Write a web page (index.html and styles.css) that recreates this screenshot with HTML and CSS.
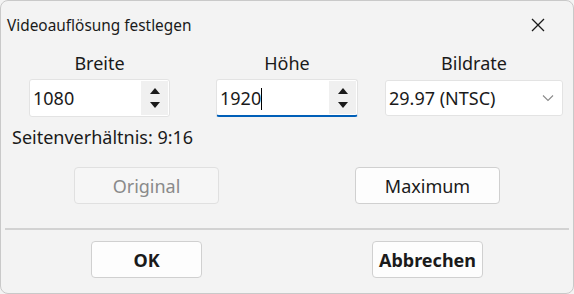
FILE: index.html
```html
<!DOCTYPE html>
<html lang="de">
<head>
  <meta charset="UTF-8" />
  <title>Videoauflösung festlegen</title>
  <link rel="stylesheet" href="styles.css">
</head>
<body>
  <div class="dialog">
    <div class="titlebar">
      <span class="title">Videoauflösung festlegen</span>
      <svg class="close" width="14" height="14" viewBox="0 0 14 14">
        <path d="M1 1 L13 13 M13 1 L1 13" stroke="#1a1a1a" stroke-width="1.3" fill="none"/>
      </svg>
    </div>

    <div class="fields">
      <div class="field width">
        <label>Breite</label>
        <div class="spin">
          <span class="value">1080</span>
          <span class="arrows"><i class="up"></i><i class="down"></i></span>
        </div>
      </div>
      <div class="field height">
        <label>Höhe</label>
        <div class="spin focused">
          <span class="value">1920<b class="caret"></b></span>
          <span class="arrows"><i class="up"></i><i class="down"></i></span>
        </div>
      </div>
      <div class="field rate">
        <label>Bildrate</label>
        <div class="combo">
          <span class="value">29.97 (NTSC)</span>
          <svg width="12" height="8" viewBox="0 0 12 8">
            <path d="M1 1.5 L6 6.5 L11 1.5" stroke="#8a8a8a" stroke-width="1.1" fill="none"/>
          </svg>
        </div>
      </div>
    </div>

    <div class="ratio">Seitenverhältnis: 9:16</div>

    <div class="presets">
      <button class="btn disabled">Original</button>
      <button class="btn">Maximum</button>
    </div>

    <div class="sep"></div>

    <div class="actions">
      <button class="btn bold">OK</button>
      <button class="btn bold">Abbrechen</button>
    </div>
  </div>
</body>
</html>
```

FILE: styles.css
```css
html, body {
  margin: 0;
  background: #f3f3f3;
}
body {
  font-family: 'Noto Sans', 'Open Sans', sans-serif;
  color: #1a1a1a;
}
.dialog {
  width: 574px;
  height: 294px;
  box-sizing: border-box;
  border: 1px solid #c9c9c9;
  border-radius: 8px;
  background: #f3f3f3;
  overflow: hidden;
}
.titlebar {
  height: 48px;
  display: flex;
  align-items: center;
  justify-content: space-between;
  padding: 0 28px 0 6px;
}
.title {
  font-size: 15.4px;
  margin-top: 1px;
}
.fields {
  display: flex;
  padding-left: 28px;
}
.field {
  display: flex;
  flex-direction: column;
  align-items: center;
}
.field.width {
  width: 141px;
}
.field.height {
  width: 142px;
  margin-left: 46px;
}
.field.rate {
  width: 178px;
  margin-left: 27px;
}
.field label {
  font-size: 18px;
  line-height: 24px;
  margin-top: 2px;
  margin-bottom: 4px;
}
.spin, .combo {
  width: 100%;
  height: 38px;
  box-sizing: border-box;
  background: #fff;
  border: 1px solid #e3e3e3;
  border-radius: 3px;
  display: flex;
  align-items: center;
  font-size: 18px;
}
.spin .value, .combo .value {
  flex: 1;
  padding-left: 3px;
}
.spin.focused {
  border-bottom: 2px solid #005fb8;
}
.caret {
  display: inline-block;
  width: 1px;
  height: 22px;
  background: #000;
  vertical-align: -5px;
}
.arrows {
  width: 27px;
  align-self: stretch;
  margin: 1px 1px 1px 0;
  background: #f0f0f0;
  display: flex;
  flex-direction: column;
  justify-content: center;
  align-items: center;
  gap: 8px;
}
.arrows i {
  width: 0;
  height: 0;
  border-left: 5.5px solid transparent;
  border-right: 5.5px solid transparent;
}
.arrows .up {
  border-bottom: 6px solid #1a1a1a;
}
.arrows .down {
  border-top: 6px solid #1a1a1a;
}
.combo {
  height: 36px;
  margin-top: 1px;
  padding-right: 8px;
}
.ratio {
  font-size: 18px;
  padding-left: 11px;
  margin-top: 8px;
  line-height: 24px;
}
.presets, .actions {
  display: flex;
}
.presets {
  margin-top: 18px;
  padding-left: 73px;
  gap: 136px;
}
.btn {
  font-family: inherit;
  font-size: 18px;
  color: #1a1a1a;
  width: 145px;
  height: 37px;
  background: #fdfdfd;
  border: 1px solid #d0d0d0;
  border-radius: 4px;
  padding: 0;
}
.btn.disabled {
  color: #8a8a8a;
  background: #f6f6f6;
  border-color: #e0e0e0;
}
.sep {
  height: 2px;
  background: #d2d2d2;
  margin: 24px 4px 0 4px;
}
.actions {
  margin-top: 11px;
  padding-left: 90px;
  gap: 170px;
}
.actions .btn {
  width: 111px;
  font-weight: bold;
}
```
